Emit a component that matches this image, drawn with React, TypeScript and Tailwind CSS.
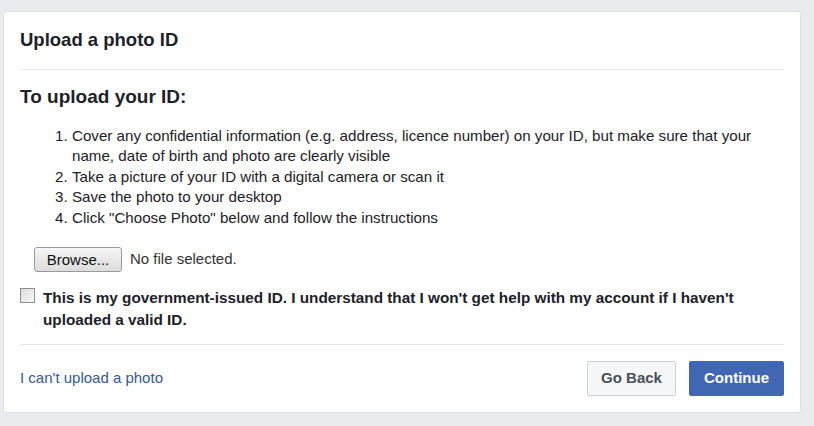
const STEPS = [
  "Cover any confidential information (e.g. address, licence number) on your ID, but make sure that your name, date of birth and photo are clearly visible",
  "Take a picture of your ID with a digital camera or scan it",
  "Save the photo to your desktop",
  'Click "Choose Photo" below and follow the instructions',
];

export default function App() {
  return (
    <div
      className="min-h-[426px] w-full bg-[#e9ebee] pt-[11px] pl-[3px]"
      style={{ fontFamily: '"Liberation Sans", Arial, sans-serif' }}
    >
      <div className="w-[798px] rounded-[3px] border border-[#dddfe2] bg-white">
        {/* Header */}
        <div className="mx-4 border-b border-[#e5e6e9] pt-4 pb-[17px]">
          <h2 className="text-[18.5px] font-bold leading-[24px] text-[#1d2129]">Upload a photo ID</h2>
        </div>

        {/* Body */}
        <div className="mx-4 border-b border-[#e5e6e9] pt-[15px] pb-[14px]">
          <h3 className="text-[19px] font-bold leading-[24px] text-[#1d2129]">To upload your ID:</h3>

          <ol className="mt-[17px] ml-[35px] text-[15.15px] leading-[20.4px] text-[#1d2129]">
            {STEPS.map((step, i) => (
              <li key={i} className="flex">
                <span className="w-[17px] flex-shrink-0">{i + 1}.</span>
                <span className="pr-2">{step}</span>
              </li>
            ))}
          </ol>

          <div className="mt-[19px] ml-[14px] flex items-center gap-2">
            <button className="h-[25px] w-[88px] rounded-[3px] border border-[#9a9a9a] bg-gradient-to-b from-[#f6f6f6] to-[#dcdcdc] text-[15px] leading-none text-[#111]">
              Browse...
            </button>
            <span className="text-[15px] text-[#333]">No file selected.</span>
          </div>

          <label className="mt-[15px] flex items-start gap-2">
            <span className="mt-[1px] h-[15px] w-[15px] flex-shrink-0 border border-[#8f8f8f] bg-gradient-to-br from-[#dcdcdc] to-[#fafafa]" />
            <span className="text-[15.3px] font-bold leading-[21.5px] text-[#1d2129]">
              This is my government-issued ID. I understand that I won't get help with my account if I haven't uploaded a
              valid ID.
            </span>
          </label>
        </div>

        {/* Footer */}
        <div className="mx-4 flex items-center justify-between py-4">
          <a className="text-[15px] text-[#365899]">I can't upload a photo</a>
          <div className="flex gap-[13px]">
            <button className="h-[35px] w-[89px] rounded-[2px] border border-[#ced0d4] bg-[#f6f7f9] text-[15px] font-bold text-[#4b4f56]">
              Go Back
            </button>
            <button className="h-[35px] w-[95px] rounded-[2px] border border-[#4267b2] bg-[#4267b2] text-[15px] font-bold text-white">
              Continue
            </button>
          </div>
        </div>
      </div>
    </div>
  );
}
